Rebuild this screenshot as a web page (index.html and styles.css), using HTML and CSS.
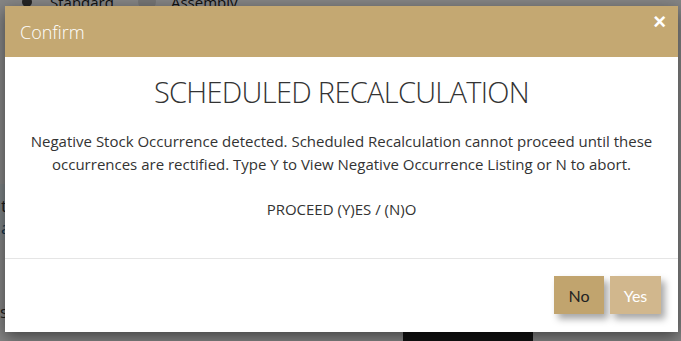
FILE: index.html
```html
<html>
    <head>
        <meta charset="utf-8">
        <link rel="stylesheet" href="styles.css">
    </head>
    <body>
        <div class="under">
            <div class="options">
                <span class="radio"></span><span class="opt">Standard</span>
                <span class="radio radio-off"></span><span class="opt">Assembly</span>
            </div>
            <div class="panel">
                <div class="panel-line">t</div>
                <div class="panel-line link">a</div>
            </div>
            <div class="under-text">st</div>
            <div class="under-btn"></div>
        </div>
        <div class="backdrop"></div>
        <div class="modal">
            <div class="modal-header">
                <span class="modal-title">Confirm</span>
                <span class="close">&times;</span>
            </div>
            <div class="modal-body">
                <h1 class="heading">SCHEDULED RECALCULATION</h1>
                <p class="message">Negative Stock Occurrence detected. Scheduled Recalculation cannot proceed until these occurrences are rectified. Type Y to View Negative Occurrence Listing or N to abort.</p>
                <p class="prompt">PROCEED (Y)ES / (N)O</p>
            </div>
            <div class="modal-footer">
                <button class="btn btn-no">No</button>
                <button class="btn btn-yes">Yes</button>
            </div>
        </div>
    </body>
</html>
```

FILE: styles.css
```css
body {
    margin: 0;
    width: 681px;
    height: 341px;
    overflow: hidden;
    background: #f2f2f2;
    font-family: "Open Sans", "Noto Sans", sans-serif;
}

.under {
    position: relative;
    height: 341px;
}

.options {
    display: flex;
    align-items: center;
    padding-left: 22px;
    margin-top: -10px;
    height: 24px;
    font-size: 15px;
    color: #222;
}

.radio {
    width: 10px;
    height: 10px;
    border-radius: 50%;
    background: #444;
    margin-right: 18px;
}

.radio-off {
    width: 18px;
    height: 18px;
    background: #d8d8d8;
    margin-right: 15px;
}

.opt {
    margin-right: 24px;
}

.panel {
    margin-top: 170px;
    width: 200px;
    height: 56px;
    background: #e6f1f5;
    padding-top: 10px;
    box-sizing: border-box;
    font-size: 17px;
    color: #333;
}

.panel-line {
    height: 22px;
    padding-left: 1px;
}

.link {
    color: #1c5c8c;
}

.under-text {
    margin-top: 60px;
    font-size: 17px;
    color: #333;
}

.under-btn {
    position: absolute;
    left: 403px;
    top: 330px;
    width: 130px;
    height: 30px;
    background: #222;
}

.backdrop {
    position: absolute;
    inset: 0;
    background: rgba(0, 0, 0, 0.45);
}

.modal {
    position: absolute;
    left: 5px;
    top: 6px;
    width: 673px;
    height: 326px;
    background: #fff;
    box-shadow: 0 5px 15px rgba(0, 0, 0, 0.5);
    display: flex;
    flex-direction: column;
}

.modal-header {
    height: 51px;
    background: #c4a872;
    display: flex;
    align-items: center;
    justify-content: space-between;
    padding: 0 12px 0 15px;
    color: #fff;
}

.modal-title {
    font-size: 18px;
    font-weight: 300;
    margin-top: 1px;
}

.close {
    font-size: 22px;
    font-weight: 700;
    line-height: 1;
    margin-top: -20px;
    font-family: "Liberation Sans", sans-serif;
}

.modal-body {
    height: 201px;
    border-bottom: 1px solid #e5e5e5;
    text-align: center;
    color: #333;
    padding: 0 20px;
}

.heading {
    margin: 15px 0 0;
    font-size: 29px;
    font-weight: 300;
    letter-spacing: -0.7px;
    line-height: 40px;
    color: #333;
}

.message {
    margin: 18px 0 0;
    font-size: 15px;
    line-height: 23px;
}

.prompt {
    margin: 22px 0 0;
    font-size: 15px;
    line-height: 23px;
}

.modal-footer {
    display: flex;
    justify-content: flex-end;
    gap: 6px;
    padding: 17px 17px 0 0;
}

.btn {
    height: 38px;
    border: none;
    font-family: Lato, sans-serif;
    font-size: 16px;
    box-shadow: 4px 5px 7px rgba(0, 0, 0, 0.35);
    padding: 0;
}

.btn-no {
    width: 50px;
    background: #c1a46e;
    color: #222;
}

.btn-yes {
    width: 51px;
    background: #d1b78d;
    color: #fff;
}
```
